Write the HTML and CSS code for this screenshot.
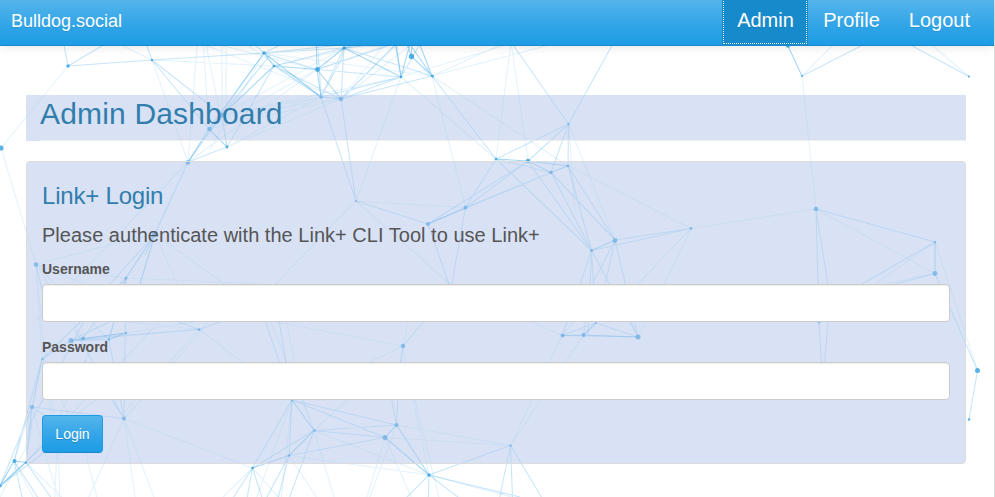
FILE: index.html
```html
<!DOCTYPE html>
<html lang="en">
<head>
<meta charset="utf-8">
<title>Bulldog.social</title>
<link rel="stylesheet" href="styles.css">
</head>
<body>
<svg class="particles" viewBox="0 0 995 497" aria-hidden="true">
<path class="strong" d="M264 53L209 129M274 66L222 115M209 129L188 162M209 129L227 147M264 53L274 66L317 69.500L321 97L341 99M317 69.500L344 48M264 53L321 97M317 69.500L316 30M344 48L380 38M344 48L401 77L411 40M394 30L401 77M400 30L432 76L411.500 56.500L402 30M411.500 56.500L412 30M420 45L432 76M317 69.500L341 99M788 46L802 76M496 159L528 161L568 166L551 172.500L528 161M465.500 207.500L428 224M591.500 250.500L615 240M562 335.500L583.500 335L638 337M583.500 335L596 323M71 340.500L83 338.500L126 333M71 340.500L109 339.500M14 461L26 462.500L0 486L14 461M252.500 468L289 455.500M385 437.500L396.500 425M396.500 425L429 475L385 437.500M292 400L314 430.500L289 455.500M935 242V273M126 278L109 339.500L126 333M155 234L140 284M155 234L126 278"/>
<path class="mid" d="M68 66L63 40M68 66L152 60L145 40M68 66L115 38M152 60L264 53M152 60L222 115M152 60L209 129M188 162L227 147L222 115M188 162L155 234M222 115L188 162M222 115L270 55M227 147L274 66M264 53L250 40M264 53L317 69.500L401 77M264 53L344 48L432 76M274 66L344 48M274 66L341 99M274 66L321 97M321 97L341 60L350 30M321 97L401 77M321 97L344 48M321 97L317 30M341 99L344 48M341 99L401 77M341 99L432 76M341 99L398 42M341 99L411 30M317 69.500L406 40M344 48L411 40M264 53L370 42M264 53L300 35M401 77L394 38M401 77L420 44M496 159L432 76M568.500 124L496 159M568.500 124L528 161M568.500 124L551 172.500M568.500 124L568 166M568.500 124L511 42M568.500 124L615 40M496 159L551 172.500M496 159L465.500 207.500M528 161L465.500 207.500L551 172.500M528 161L428 224L551 172.500M356 201L428 224L451 290M465.500 207.500L449 300M321 97L356 201L341 99M568 166L615 240M551 172.500L615 240M528 161L591.500 250.500M496 159L591.500 250.500M551 172.500L591.500 250.500L568 166M615 240L691 228.500L591.500 250.500M591.500 250.500L580 285M591.500 250.500L588 335M591.500 250.500L596 323M615 240L605 285M615 240L592 285M615 240L638 337M591.500 250.500L638 337M562 335.500L596 323L638 337L562 335.500L572 310M583.500 335L589 300M638 337L630 320M802 76L900 26M969 76.500L890 34M816 209L828 285M816 209L818 285M819 322L822 370M829 310L824 370M816 209L935 242L862 284M935 273.500L895 284M935 273.500L977.500 370.500L969 419.500M188 162L145 255M155 234L96 300M36 264.500L42 290M126 278L124 418.500M126 278L83 338.500M71 340.500L42 359L126 278M71 340.500L199 329.500L250 311M83 338.500L199 329.500M71 340.500L109 322M71 340.500L126 333M199 329.500L176 321M42 359L32 407L0 486M42 359L14 461M32 407L26 462.500M32 407L124 418.500L75 330M124 418.500L85 360M124 418.500L109 340M32 407L96 450M26 462.500L60 510M14 461L46 510M14 461L25 510M0 486L60 430M0 486L80 425M26 462.500L32 420L95 300M292 400L252.500 468L314 430.500M292 400L289 455.500L260 510M292 400L396.500 425M292 400L385 437.500M314 430.500L396.500 425M314 430.500L385 437.500L289 455.500M252.500 468L245 510M252.500 468L266 510M252.500 468L225 510M289 455.500L275 510M314 430.500L285 510M396.500 425L398 396M396.500 425L391 396M403 346L425 320M403 346L401 365M403 346L400 365M429 475L510.500 445.500L497 510M510.500 445.500L513 510M510.500 445.500L548 508M429 475L428 510M429 475L475 510M429 475L520 497M429 475L400 504M265 320L292 400M279 320L292 400"/>
<path class="faint" d="M68 66L1 148L36 264.500M152 60L188 162M152 60L90 30M152 60L274 66M264 53L210 150M264 53L188 162M203 40L209 129M205 40L227 147M226 40V115M222 40L222 115M198 35L188 162M321 97L222 115M341 99L222 115M321 97L209 129L341 99M401 77L222 115M321 97L227 147L341 99M317 69.500L209 129M317 69.500L188 162M344 48L222 115M341 99L205 45M317 69.500L160 30M321 97L240 40M401 77L530 38M432 76L511 40M432 76L568 40M264 53L432 76M274 66L430 30M344 48L440 42M341 99L430 30M341 99L388 40M317 69.500L430 30M356 201L401 77L496 159M356 201L465.500 207.500M356 201L250 310M356 201L451 285M432 76L465.500 207.500M432 76L568 166M511 42L496 159M511 42L528 161M188 162L36 320M155 234L90 250L36 264.500M155 234L180 290M155 234L260 310M568.500 124L615 240M568.500 124L575 210M816 209L935 273.500M691 228.500L816 209M691 228.500L637 285M691 228.500L664 285M568 166L691 228.500M802 76L816 209M802 76L840 38M969 76.500L926 40M935 242L977.500 370.500M935 242L875 284M935 273.500L885 284M36 264.500L126 278M36 264.500L42 359M36 264.500L85 284M36 264.500L83 338.500M36 264.500L109 339.500M199 329.500L126 410M199 329.500L292 400M199 329.500L110 320M126 278L260 284M126 333L260 311M42 359L25 450L0 497M42 359L85 450L100 510M32 407L14 461M32 407L58 497M42 359L58 430L54 510M58 430L60 510M26 462.500L70 410M26 462.500L180 300M14 461L40 510M26 462.500L75 510M124 418.500L83 510M124 418.500L159 510M124 418.500L137 510M124 418.500L252.500 468M124 418.500L160 380L210 320M53 430L90 350M36 264.500L52 430M55 430L124 380M270 320L314 430.500M286 320L300 390L314 430.500M292 400L252 510M292 400L280 510M314 430.500L338 510M289 455.500L325 510M314 430.500L429 475L289 455.500M314 430.500L350 397M403 346L250 317M403 346L340 376M403 346L408 320M403 346L407 370L429 475M396.500 425L510.500 445.500L385 437.500M396.500 425L365 510M385 437.500L363 510M385 437.500L417 510M414 396L442 510M510.500 445.500L546 370L562 335.500M510.500 445.500L583.500 335M562 335.500L530 321M562 335.500L605 285M638 337L650 315M429 475L560 510M252.500 468L290 510M252.500 468L210 510"/>
<g class="dots">
<circle cx="68" cy="66" r="1.800"/><circle cx="152" cy="60" r="1.200"/><circle cx="264" cy="53" r="1.800"/><circle cx="274" cy="66" r="1.300"/><circle cx="317.500" cy="69.500" r="2.400"/><circle cx="344" cy="48" r="1.700"/><circle cx="321" cy="97" r="1.700"/><circle cx="341" cy="99" r="2.300"/><circle cx="401" cy="77" r="1.200"/><circle cx="432.500" cy="76" r="1.500"/><circle cx="411.500" cy="56.500" r="2.700"/><circle cx="209.500" cy="129" r="2.300"/><circle cx="222" cy="115" r="2.500"/><circle cx="227" cy="147" r="1.400"/><circle cx="188" cy="162.500" r="2.300"/><circle cx="1" cy="148" r="2.600"/><circle cx="155" cy="234" r="2.900"/><circle cx="356" cy="201" r="1"/><circle cx="465.500" cy="207.500" r="2"/><circle cx="428" cy="224" r="2"/>
<circle cx="496" cy="159" r="1.300"/><circle cx="528" cy="161" r="2.200"/><circle cx="551" cy="172.500" r="1.800"/><circle cx="568" cy="166" r="1.400"/><circle cx="568.500" cy="124" r="1.200"/><circle cx="615" cy="240.500" r="2.400"/><circle cx="591.500" cy="250.500" r="1.500"/><circle cx="691" cy="228.500" r="1.400"/><circle cx="816" cy="209" r="2.300"/><circle cx="802" cy="76" r="1"/><circle cx="788" cy="45.500" r="2.200"/><circle cx="969" cy="76.500" r="1"/><circle cx="935" cy="242" r="1.200"/><circle cx="935" cy="273.500" r="2.400"/><circle cx="977.500" cy="370.500" r="2.500"/><circle cx="969" cy="419.500" r="1.300"/><circle cx="819" cy="322" r="1.500"/>
<circle cx="562.500" cy="335.500" r="2"/><circle cx="583.500" cy="335" r="1.900"/><circle cx="638" cy="337" r="2.500"/><circle cx="596" cy="323" r="1"/><circle cx="403" cy="346" r="2.200"/><circle cx="292" cy="400" r="1.400"/><circle cx="314.500" cy="430.500" r="1.200"/><circle cx="289" cy="455.500" r="1.200"/><circle cx="252.500" cy="468" r="1.300"/><circle cx="396.500" cy="425" r="2.100"/><circle cx="385" cy="437.500" r="2.500"/><circle cx="510.500" cy="445.500" r="1.200"/><circle cx="429" cy="475" r="1.700"/><circle cx="36" cy="264.500" r="2.200"/><circle cx="126" cy="278" r="1.500"/><circle cx="71" cy="340.500" r="2.500"/><circle cx="83" cy="338.500" r="2.100"/><circle cx="109" cy="339.500" r="1.200"/><circle cx="126" cy="333" r="1.200"/><circle cx="199" cy="329.500" r="1.500"/><circle cx="42.500" cy="359" r="1.200"/><circle cx="32" cy="407" r="2.100"/><circle cx="124" cy="418.500" r="1.900"/><circle cx="14.500" cy="461" r="2.100"/><circle cx="26" cy="462.500" r="1.200"/><circle cx="0.500" cy="486" r="1.300"/>
</g>
</svg>
<div class="page">
<nav class="navbar">
<a class="brand">Bulldog.social</a>
<div class="menu"><a class="item active">Admin</a><a class="item">Profile</a><a class="item">Logout</a></div>
</nav>
<main class="content">
<header class="heading"><h1>Admin Dashboard</h1></header>
<form class="well">
<h2>Link+ Login</h2>
<p>Please authenticate with the Link+ CLI Tool to use Link+</p>
<label for="username">Username</label>
<input id="username" type="text">
<label for="password">Password</label>
<input id="password" type="password">
<button type="button">Login</button>
</form>
</main>
</div>
</body>
</html>
```
FILE: styles.css
```css
* { box-sizing: border-box; }
body {
  margin: 0;
  height: 497px;
  overflow: hidden;
  background: #fff;
  font: 14px/20px "Liberation Sans", Arial, sans-serif;
  color: #555;
}
.particles {
  position: absolute;
  top: 0;
  left: 0;
  width: 995px;
  height: 497px;
}
.particles path { fill: none; stroke: #2fa4e7; stroke-width: 1.1; }
.strong { opacity: .42; }
.mid { opacity: .26; }
.faint { opacity: .13; }
.dots { fill: #2497de; opacity: .72; }
.page {
  position: relative;
  height: 497px;
  border-right: 1px solid #ddd;
}
.navbar {
  display: flex;
  justify-content: space-between;
  height: 46px;
  padding: 0 9px 0 11px;
  background: linear-gradient(#54b4eb, #2fa4e7 60%, #1d9ce5);
  border-bottom: 1px solid #178acc;
  box-shadow: 0 1px 10px rgba(0, 0, 0, .1);
  color: #fff;
  text-shadow: 0 1px 0 rgba(0, 0, 0, .1);
}
.brand { font-size: 18px; line-height: 42px; }
.menu { display: flex; font-size: 20px; line-height: 40px; }
.item { padding: 0 15px; height: 45px; }
.item:last-child { padding-left: 14px; }
.active {
  width: 86px;
  background: #178acc;
  outline: 1px dotted #fff;
  outline-offset: -2px;
  margin-top: -2px;
  height: 47px;
  padding-top: 2px;
}
.content { padding: 49px 28px 0 26px; }
.heading {
  height: 46px;
  padding-left: 14px;
  background: rgba(177, 198, 233, .5);
}
h1, h2 { margin: 0; font-weight: normal; color: #317eac; }
h1 {
  height: 46px;
  border-bottom: 1px solid #eee;
  font-size: 30px;
  line-height: 38px;
  letter-spacing: .17px;
}
.well {
  display: flex;
  flex-direction: column;
  height: 303px;
  margin-top: 20px;
  padding: 19px 15px;
  border: 1px solid #dcdcdc;
  border-radius: 4px;
  background: rgba(177, 198, 233, .5);
}
.well > * { flex-shrink: 0; }
h2 { font-size: 24px; line-height: 30px; letter-spacing: -.2px; }
p { margin: 10px 0; font-size: 20px; line-height: 28px; letter-spacing: .02px; }
label { height: 20px; margin-bottom: 5px; font-weight: bold; }
input {
  width: 100%;
  height: 38px;
  margin: 0 0 15px;
  border: 1px solid #ccc;
  border-radius: 4px;
  background: #fff;
  box-shadow: inset 0 1px 1px rgba(0, 0, 0, .075);
}
button {
  width: 61px;
  height: 38px;
  padding: 0;
  border: 1px solid #1d9ce5;
  border-bottom-color: #178acc;
  border-radius: 4px;
  background: linear-gradient(#54b4eb, #2fa4e7 60%, #1d9ce5);
  color: #fff;
  font: 14px/20px "Liberation Sans", Arial, sans-serif;
  text-shadow: 0 1px 0 rgba(0, 0, 0, .2);
}
```
